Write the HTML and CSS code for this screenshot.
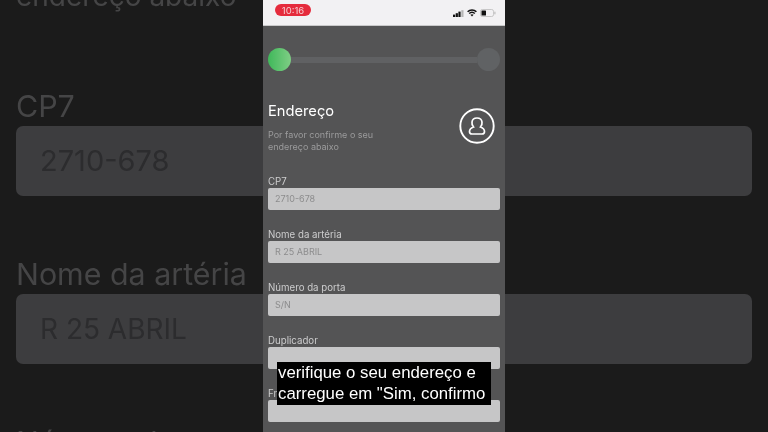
FILE: index.html
```html
<!DOCTYPE html>
<html lang="pt">
<head>
<meta charset="utf-8">
<title>Endereço</title>
<link rel="stylesheet" href="styles.css">
</head>
<body>
<main class="stage">
  <div class="backdrop">
    <p class="bd-sub">endereço abaixo</p>
    <div class="bd-group">
      <div class="bd-label">CP7</div>
      <div class="bd-field">2710-678</div>
    </div>
    <div class="bd-group">
      <div class="bd-label">Nome da artéria</div>
      <div class="bd-field bd-field-text">R 25 ABRIL</div>
    </div>
    <div class="bd-group">
      <div class="bd-label">Número da porta</div>
    </div>
  </div>
  <section class="phone">
    <header class="status">
      <span class="pill">10:16</span>
      <div class="status-icons">
        <svg class="sig" width="11" height="7" viewBox="0 0 11 7"><rect x="0" y="4.6" width="2.2" height="2.4" fill="#111"/><rect x="2.7" y="3.2" width="2.2" height="3.8" fill="#111"/><rect x="5.4" y="1.6" width="2.2" height="5.4" fill="#111"/><rect x="8.3" y="0.2" width="2.2" height="6.8" fill="#b5b5b5"/></svg>
        <svg class="wifi" width="10" height="8" viewBox="0 0 10 8"><path d="M.6 2.8C3 .4 7 .4 9.4 2.8M2.2 4.5C3.8 3 6.2 3 7.8 4.5" fill="none" stroke="#111" stroke-width="1.5"/><path d="M3.4 5.8C4.4 5 5.6 5 6.6 5.8L5 7.6Z" fill="#111"/></svg>
        <svg class="batt" width="16" height="8" viewBox="0 0 16 8"><rect x=".5" y=".5" width="13" height="7" rx="1.8" fill="none" stroke="#bdbdbd" stroke-width=".8"/><rect x="1.5" y="1.5" width="4.5" height="5" rx=".6" fill="#111"/><rect x="14.3" y="2.7" width="1.2" height="2.6" fill="#bdbdbd"/></svg>
      </div>
    </header>
    <div class="progress">
      <span class="dot dot-on"></span>
      <span class="track"></span>
      <span class="dot dot-off"></span>
    </div>
    <div class="intro">
      <div class="intro-text">
        <h1 class="title">Endereço</h1>
        <p class="sub">Por favor confirme o seu<br>endereço abaixo</p>
      </div>
      <svg class="avatar" width="36" height="36" viewBox="0 0 36 36">
        <circle cx="18" cy="18" r="16.7" fill="none" stroke="#fff" stroke-width="1.9"/>
        <path d="M14.5 19C13 17.5 12.8 15.5 13 14C13.3 11.5 15.5 10 18 10C20.5 10 22.7 11.5 23 14C23.2 15.5 23 17.5 21.5 19C24 20 25.5 21.5 25.5 23.5C25.5 25 24.5 26 23 26L13 26C11.5 26 10.5 25 10.5 23.5C10.5 21.5 12 20 14.5 19Z" fill="none" stroke="#fff" stroke-width="1.7"/>
      </svg>
    </div>
    <div class="form">
      <div class="group"><div class="label">CP7</div><div class="field">2710-678</div></div>
      <div class="group"><div class="label">Nome da artéria</div><div class="field">R 25 ABRIL</div></div>
      <div class="group"><div class="label">Número da porta</div><div class="field">S/N</div></div>
      <div class="group"><div class="label">Duplicador</div><div class="field"></div></div>
      <div class="group"><div class="label">Fração</div><div class="field"></div></div>
    </div>
    <div class="caption">verifique o seu endereço e<br>carregue em "Sim, confirmo</div>
  </section>
</main>
</body>
</html>
```
FILE: styles.css
```css
* { box-sizing: border-box; margin: 0; padding: 0; }
html, body { width: 768px; height: 432px; overflow: hidden; background: #1b1b1b; }
body { font-family: Inter, "Liberation Sans", sans-serif; }
.stage { display: grid; width: 768px; height: 432px; overflow: hidden; }
.backdrop, .phone { grid-column: 1; grid-row: 1; }

.backdrop { height: 432px; padding: 0 16px; overflow: hidden; filter: blur(.6px); }
.bd-sub { height: 40px; margin-top: -24px; margin-bottom: 70px; font-size: 28px; line-height: 40px; color: #454546; }
.bd-group { height: 168px; }
.bd-label { height: 40px; font-size: 30.4px; line-height: 40px; color: #454546; }
.bd-field { height: 70px; padding-left: 24px; border-radius: 7px; background: #3d3d3f; color: #2c2c2e; font-size: 29px; line-height: 70px; }
.bd-field-text { font-size: 28px; }

.phone { position: relative; justify-self: center; width: 242px; height: 432px; overflow: hidden; background: #545455; filter: blur(.3px); }
.status { display: flex; justify-content: space-between; align-items: flex-start; height: 26px; padding: 4px 9px 0 12px; background: #f2f1f3; border-bottom: 1px solid #c9c9ca; }
.pill { width: 36px; height: 12px; border-radius: 6px; background: #e52b3c; color: #f6d0d3; font-size: 9.5px; line-height: 13px; text-align: center; }
.status-icons { display: flex; align-items: center; gap: 3px; margin-top: 5px; }
.progress { display: flex; align-items: center; height: 23px; margin: 22px 5px 0; }
.dot { flex: none; width: 23px; height: 23px; border-radius: 50%; }
.dot-on { background: linear-gradient(90deg, #3fb85a, #7fce85); }
.dot-off { background: #606264; }
.track { flex: 1; height: 6px; background: #606163; }
.intro { display: flex; justify-content: space-between; align-items: flex-start; height: 104px; padding: 0 10px 0 5px; }
.intro-text { padding-top: 30px; }
.title { font-size: 14.7px; line-height: 20px; font-weight: 400; color: #fff; }
.sub { margin-top: 8px; font-size: 9px; line-height: 12px; color: #9b9b9c; }
.avatar { margin-top: 37px; }
.form { padding: 0 5px; }
.group { height: 53px; }
.label { height: 13px; font-size: 9.7px; line-height: 13px; color: #cdcdce; }
.field { height: 22px; padding-left: 7px; border-radius: 2px; background: #c6c6c7; color: #8c8c8d; font-size: 9px; line-height: 22px; }
.caption { position: absolute; left: 14px; top: 362px; width: 214px; height: 43px; padding-left: 1px; background: #000; color: #fff; font-family: "Liberation Sans", sans-serif; font-size: 16.8px; line-height: 21px; white-space: nowrap; }
```
